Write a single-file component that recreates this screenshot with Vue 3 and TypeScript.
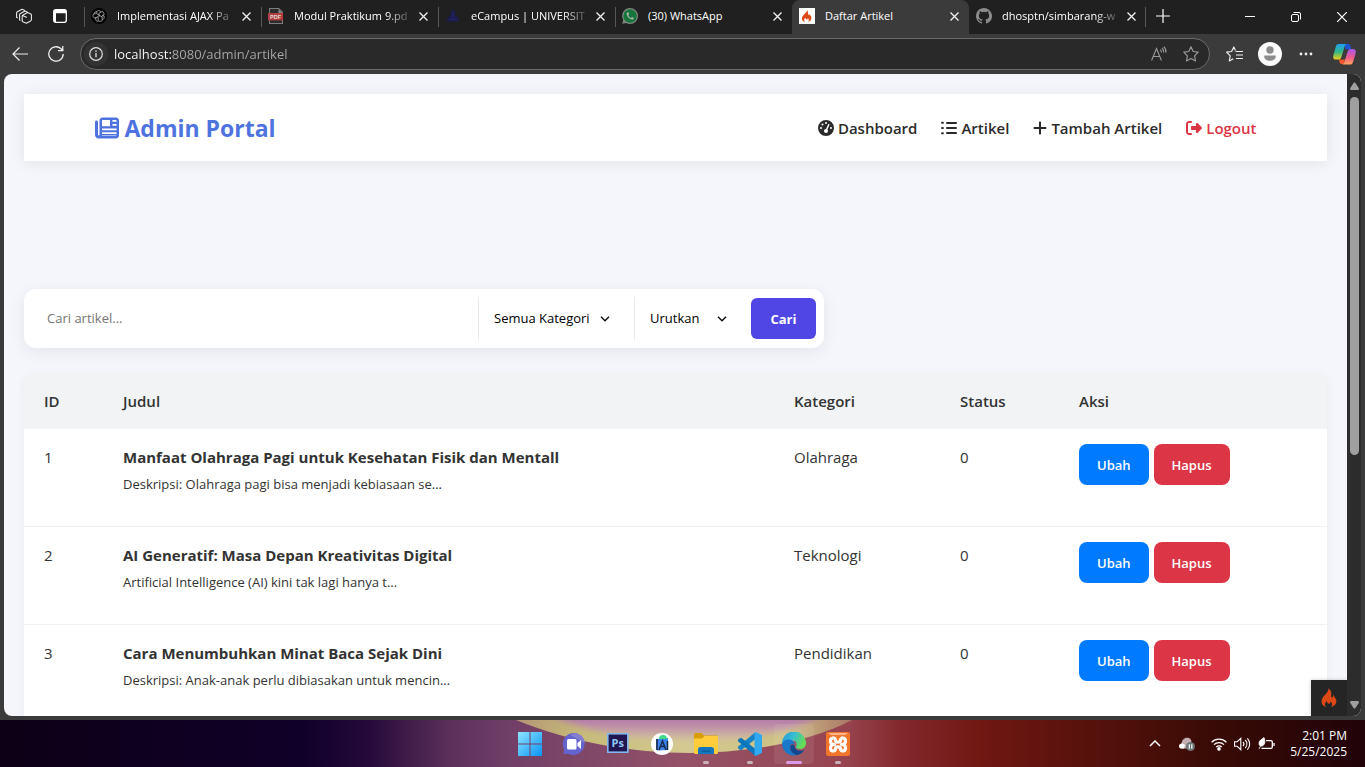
<script setup lang="ts">
import { ref } from 'vue'

interface Tab { id: string; title: string; active?: boolean; faded?: boolean }
interface Article { id: number; title: string; excerpt: string; category: string; status: number }

const tabs: Tab[] = [
  { id: 'gpt', title: 'Implementasi AJAX Pa', faded: true },
  { id: 'pdf', title: 'Modul Praktikum 9.pd', faded: true },
  { id: 'campus', title: 'eCampus | UNIVERSIT', faded: true },
  { id: 'wa', title: '(30) WhatsApp' },
  { id: 'ci', title: 'Daftar Artikel', active: true },
  { id: 'gh', title: 'dhosptn/simbarang-w', faded: true },
]

const articles: Article[] = [
  { id: 1, title: 'Manfaat Olahraga Pagi untuk Kesehatan Fisik dan Mentall', excerpt: 'Deskripsi: Olahraga pagi bisa menjadi kebiasaan se...', category: 'Olahraga', status: 0 },
  { id: 2, title: 'AI Generatif: Masa Depan Kreativitas Digital', excerpt: 'Artificial Intelligence (AI) kini tak lagi hanya t...', category: 'Teknologi', status: 0 },
  { id: 3, title: 'Cara Menumbuhkan Minat Baca Sejak Dini', excerpt: 'Deskripsi: Anak-anak perlu dibiasakan untuk mencin...', category: 'Pendidikan', status: 0 },
]

const url = ref('localhost:8080/admin/artikel')
const query = ref('')
const category = ref('')
const sort = ref('')
</script>

<template>
  <div class="desktop">
    <div class="browser">
      <header class="tabstrip">
        <button class="strip-btn" aria-label="Workspaces">
          <svg width="16" height="16" viewBox="0 0 16 16" fill="none" stroke="#e8e8e8" stroke-width="1.1" stroke-linejoin="round" stroke-linecap="round"><path d="M6.200 8.200c0-.6.300-1 .8-1.300l4.600-2.300 3.200 1.400c.4.200.6.500.6 1v4.600c0 .5-.3 1-.8 1.300l-4.200 2.300-3.600-1.400c-.4-.2-.6-.5-.6-1zM6.500 7.600l4 1.600M4 12.200l-.4-.2V6.800c0-.6.3-1 .8-1.300L9 3l2.200 1M1.400 9.800l-.8-.4V5c0-.6.3-1 .8-1.300L6 1.200 8.400 2.200" /></svg>
        </button>
        <button class="strip-btn actions-btn" aria-label="Tab actions">
          <svg width="14" height="14" viewBox="0 0 14 14"><rect x=".7" y=".7" width="12.6" height="12.6" rx="2" fill="none" stroke="#fff" stroke-width="1.300" /><path d="M1 1h12v3.200H1z M1 4h2v9H1z" fill="#fff" /></svg>
        </button>
        <div class="tabs" role="tablist">
          <div v-for="t in tabs" :key="t.id" class="tab" :class="{ active: t.active, faded: t.faded }" role="tab" :aria-selected="!!t.active">
            <svg v-if="t.id === 'gpt'" class="fav" viewBox="0 0 16 16"><circle cx="8" cy="8" r="8" fill="#000" /><g fill="none" stroke="#a8a8a8" stroke-width=".9"><path d="M8 8.900V5.200l3-1.700c1.600.5 2.400 2 1.900 3.600L9.800 8.900M8 7.100l3.200 1.800v3.500c-1.200 1.200-2.900 1.200-4 0l-.1-3.600M7.200 8.400L4 10.200c-1.700-.5-2.500-2-2-3.600l3.100-1.700M8.800 7.600L5.700 5.800V3.500c1.200-1.300 3-1.200 4 0v.5M11.200 7l1.900 1.200c.5 1.700-.4 3.200-1.900 3.600M4.800 9v3c.5 1.200 1.500 1.500 2.700 1.200M3 6.200l.4-1.500c.8-.9 1.600-1.100 2.400-1" /></g></svg>
            <svg v-else-if="t.id === 'pdf'" class="fav" viewBox="0 0 16 16"><path d="M1 0h10l4 4v12H1z" fill="#7d7d7d" /><path d="M2 1h8.600L14 4.400V15H2z" fill="#2c2c2c" /><path d="M10.500 1v4H14z" fill="#8a8a8a" /><rect x="0" y="5" width="15" height="7.400" fill="#b33c3c" /><text x="7.500" y="10.800" text-anchor="middle" font-family="Liberation Sans, sans-serif" font-size="5.500" font-weight="700" fill="#ddd">PDF</text></svg>
            <svg v-else-if="t.id === 'campus'" class="fav" viewBox="0 0 16 16"><path d="M8 1l2.400 3-.6 3 3.200 2 1.600 4.600H1.400L3 9l3.200-2-.6-3z" fill="#1b1c4c" /><path d="M4 12.600c2-2 6-2 8 0M8 4v5" stroke="#292a72" fill="none" /></svg>
            <svg v-else-if="t.id === 'wa'" class="fav" viewBox="0 0 16 16"><path d="M8 0a8 8 0 0 1 0 16 8 8 0 0 1-3.800-1L.2 15.800l1-3.800A8 8 0 0 1 8 0z" fill="#7d877f" /><circle cx="8.100" cy="8" r="6.700" fill="#17753a" /><path d="M5.600 4.200c-.8.5-1.200 1.500-.8 2.600.8 2.400 2.500 4 4.900 4.700 1 .3 2-.3 2.200-1.500l-1.800-1-.9 1C7.800 9.500 6.800 8.500 6.300 7.200l.8-.9-.7-2z" fill="#a9b5ab" /></svg>
            <svg v-else-if="t.id === 'ci'" class="fav" viewBox="0 0 16 16"><path d="M0 0h16v16H0z" fill="#fff" /><path d="M8 2c.5 2-3 4-4.500 6.500C2 11 3.500 13.300 6 14c-1.500-1.500-.8-3.200.5-4.200 0 1.200.6 1.700 1.300 1.700s1.100-.6.9-1.500c1.500 1 1.600 2.800.3 4 2.500-.6 3.800-2.500 3.300-4.700-.3-1.500-1.500-2-1.600-3.300-.5.3-.6.8-.5 1.500C8.500 6.500 9.500 3.500 8 2z" fill="#dd4814" /></svg>
            <svg v-else class="fav" viewBox="0 0 16 16"><path d="M8 0C3.580 0 0 3.580 0 8c0 3.540 2.290 6.530 5.470 7.590.4.070.55-.17.55-.38v-1.490c-2.010.37-2.530-.49-2.690-.94-.09-.23-.48-.94-.82-1.130-.28-.15-.68-.52-.01-.53.63-.01 1.080.58 1.230.82.72 1.210 1.870.87 2.330.66.07-.52.28-.87.51-1.070-1.780-.2-3.640-.89-3.640-3.950 0-.87.31-1.590.82-2.150-.08-.2-.36-1.020.08-2.120 0 0 .67-.21 2.200.82a7.600 7.600 0 0 1 4 0c1.530-1.040 2.200-.82 2.200-.82.44 1.100.16 1.920.08 2.120.51.56.82 1.270.82 2.150 0 3.070-1.870 3.750-3.650 3.950.29.25.54.73.54 1.480v2.200c0 .21.15.46.55.38A8 8 0 0 0 8 0z" fill="#8b8b8b" /></svg>
            <span class="tab-title">{{ t.title }}</span>
            <button class="tab-close" :aria-label="'Close ' + t.title">
              <svg width="9" height="9" viewBox="0 0 9 9"><path d="M.5.5l8 8M8.500.5l-8 8" stroke="#f2f2f2" stroke-width="1.300" /></svg>
            </button>
          </div>
        </div>
        <button class="new-tab" aria-label="New tab">
          <svg width="14" height="14" viewBox="0 0 14 14"><path d="M7 0v14M0 7h14" stroke="#fff" stroke-width="1.200" /></svg>
        </button>
        <div class="win-controls">
          <button aria-label="Minimize"><svg width="10" height="10" viewBox="0 0 10 10"><path d="M0 4.500h10" stroke="#fff" /></svg></button>
          <button aria-label="Restore"><svg width="10" height="10" viewBox="0 0 10 10" fill="none" stroke="#fff"><rect x=".5" y="2.500" width="7" height="7" rx="1.500" /><path d="M2.500.5H8A1.500 1.500 0 0 1 9.500 2v5.500" /></svg></button>
          <button aria-label="Close window"><svg width="10" height="10" viewBox="0 0 10 10"><path d="M0 0l10 10M10 0L0 10" stroke="#fff" stroke-width="1.200" /></svg></button>
        </div>
      </header>

      <div class="toolbar">
        <button class="tool" aria-label="Back"><svg width="16" height="14" viewBox="0 0 16 14" fill="none" stroke="#eee" stroke-width="1.200"><path d="M16 7H1M7.500.5L1 7l6.500 6.500" /></svg></button>
        <button class="tool" aria-label="Refresh"><svg width="16" height="16" viewBox="0 0 16 16" fill="none" stroke="#eee" stroke-width="1.300"><path d="M15.200 8A7.200 7.200 0 1 1 13 2.800L14.500 4.500M14.800 0v4.700H10" /></svg></button>
        <div class="address">
          <span class="info"><svg width="14" height="14" viewBox="0 0 14 14"><circle cx="7" cy="7" r="6.300" fill="none" stroke="#ddd" stroke-width="1.200" /><path d="M7 6v4.200M7 3.600v1.300" stroke="#ddd" stroke-width="1.300" /></svg></span>
          <input v-model="url" class="url" type="text" aria-label="Address" />
          <button aria-label="Read aloud"><svg width="16" height="16" viewBox="0 0 16 16" fill="none" stroke="#999" stroke-width="1.100"><path d="M.6 14.500L5.500 2.500l4.900 12M2.300 10.500h6.400M9.200 3.600c.9.800 1.300 1.700 1.200 2.900M11 2c1.300 1.200 1.800 2.700 1.600 4.500M12.700.6c1.800 1.600 2.500 3.600 2.200 6" /></svg></button>
          <button aria-label="Add to favorites"><svg width="16" height="16" viewBox="0 0 16 16" fill="none" stroke="#999" stroke-width="1.200" stroke-linejoin="round"><path d="M8 .8l2.200 4.700 5 .7-3.600 3.600.9 5.200L8 12.500 3.500 15l.9-5.200L.8 6.200l5-.7z" /></svg></button>
        </div>
        <button class="tool" aria-label="Favorites"><svg width="17" height="16" viewBox="0 0 17 16" fill="none" stroke="#eee" stroke-width="1.200" stroke-linejoin="round"><path d="M9.500 4.500L7.800 1 5.600 5.500l-5 .7 3.600 3.600L3.300 15l4-2.200M9.500 5.500H17M10 9h7M10 12.500h7" /></svg></button>
        <button class="tool profile" aria-label="Profile"><svg width="24" height="24" viewBox="0 0 24 24"><circle cx="12" cy="12" r="12" fill="#fbfbfb" /><circle cx="12" cy="8" r="3.700" fill="#8c8c8c" /><path d="M6.300 13.500h11.400c.5 3.300-2 5.300-5.700 5.300s-6.200-2-5.700-5.300z" fill="#8c8c8c" /></svg></button>
        <button class="tool" aria-label="Settings and more"><svg width="14" height="4" viewBox="0 0 14 4" fill="#eee"><circle cx="2" cy="2" r="1.400" /><circle cx="7" cy="2" r="1.400" /><circle cx="12" cy="2" r="1.400" /></svg></button>
        <button class="tool copilot" aria-label="Copilot">
          <svg width="23" height="21" viewBox="0 0 23 21">
            <defs>
              <linearGradient id="cpA" x1="0" y1="0" x2="0" y2="1"><stop offset="0" stop-color="#1fa0f2" /><stop offset=".5" stop-color="#2fb889" /><stop offset="1" stop-color="#f3cf16" /></linearGradient>
              <linearGradient id="cpB" x1="0" y1="0" x2="0" y2="1"><stop offset="0" stop-color="#a657ee" /><stop offset=".55" stop-color="#ef5a8d" /><stop offset="1" stop-color="#ffa45a" /></linearGradient>
            </defs>
            <path d="M12 0h3c2 0 2.600 1.500 3.200 5.200h-5.700z" fill="#1b54d8" />
            <path d="M6 15.500h6L10.500 20H8.600C6.600 20 6.400 18.300 6 15.500z" fill="#f0582b" />
            <path d="M5.800 0h7.700c-1.600.9-2 2.800-2.700 5.200L8.400 13c-.7 2-1.500 2.600-3.400 2.600H2.700C.4 15.600-.3 13.800.4 11.200L2.700 3C3.400.8 4.200 0 5.800 0z" fill="url(#cpA)" />
            <path d="M17 20.500H9.500c1.500-.9 2-2.800 2.700-5.200l2.400-7.600c.7-2 1.500-2.700 3.400-2.700h2.200c2.300 0 3 1.900 2.400 4.400l-2.400 8c-.7 2.200-1.600 3.100-3.200 3.100z" fill="url(#cpB)" />
          </svg>
        </button>
      </div>

      <div class="viewport">
        <div class="page">
          <nav class="navbar">
            <div class="container">
              <a class="brand" href="#">
                <svg width="24" height="24" viewBox="0 0 512 512" fill="currentColor" fill-rule="evenodd"><path d="M96 96c0-35.300 28.700-64 64-64h288c35.300 0 64 28.700 64 64v320c0 35.300-28.700 64-64 64H80c-44.200 0-80-35.800-80-80V128c0-17.700 14.300-32 32-32s32 14.300 32 32v272c0 8.800 7.200 16 16 16s16-7.200 16-16zM165 86q-15 0-15 15v105q0 15 15 15h155V86zM372 86v38h88v-23q0-15-15-15zM372 172v38h88v-38zM150 266v38h310v-38zM150 348v38h310v-38zM148 426h300q12 0 12-8H150z" /></svg>
                <span>Admin Portal</span>
              </a>
              <div class="links">
                <a href="#"><svg width="16" height="16" viewBox="0 0 512 512"><path fill="currentColor" d="M0 256a256 256 0 1 1 512 0A256 256 0 1 1 0 256zM288 96a32 32 0 1 0-64 0 32 32 0 1 0 64 0zM256 416c35.300 0 64-28.700 64-64 0-17.400-6.900-33.100-18.100-44.600L366 161.700c5.300-12.100-.2-26.300-12.300-31.600s-26.300.2-31.600 12.300L257.900 288H256c-35.300 0-64 28.700-64 64s28.700 64 64 64zM176 144a32 32 0 1 0-64 0 32 32 0 1 0 64 0zM96 288a32 32 0 1 0 0-64 32 32 0 1 0 0 64zm352-32a32 32 0 1 0-64 0 32 32 0 1 0 64 0z" /></svg>Dashboard</a>
                <a href="#"><svg width="16" height="16" viewBox="0 0 512 512"><path fill="currentColor" d="M24 56h48a16 16 0 0 1 16 16v32a16 16 0 0 1-16 16H24a16 16 0 0 1-16-16V72a16 16 0 0 1 16-16zM24 224h48a16 16 0 0 1 16 16v32a16 16 0 0 1-16 16H24a16 16 0 0 1-16-16v-32a16 16 0 0 1 16-16zM24 392h48a16 16 0 0 1 16 16v32a16 16 0 0 1-16 16H24a16 16 0 0 1-16-16v-32a16 16 0 0 1 16-16zM192 64h288a32 32 0 0 1 0 64H192a32 32 0 0 1 0-64zM192 224h288a32 32 0 0 1 0 64H192a32 32 0 0 1 0-64zM192 384h288a32 32 0 0 1 0 64H192a32 32 0 0 1 0-64z" /></svg>Artikel</a>
                <a href="#"><svg width="14" height="16" viewBox="0 0 448 512"><path fill="currentColor" d="M256 80c0-17.700-14.300-32-32-32s-32 14.300-32 32v144H48c-17.700 0-32 14.300-32 32s14.300 32 32 32h144v144c0 17.700 14.300 32 32 32s32-14.300 32-32V288h144c17.700 0 32-14.300 32-32s-14.300-32-32-32H256V80z" /></svg>Tambah Artikel</a>
                <a href="#" class="logout"><svg width="16" height="16" viewBox="0 0 512 512"><path fill="currentColor" d="M377.900 105.900L500.700 228.700c7.200 7.200 11.300 17.100 11.300 27.300s-4.100 20.100-11.300 27.300L377.900 406.100c-6.400 6.400-15 9.900-24 9.900-18.700 0-33.900-15.200-33.900-33.900V320H192c-17.700 0-32-14.300-32-32v-64c0-17.700 14.300-32 32-32h128v-62.100c0-18.700 15.200-33.900 33.900-33.900 9 0 17.600 3.600 24 9.900zM160 96H96c-17.700 0-32 14.300-32 32v256c0 17.700 14.300 32 32 32h64c17.700 0 32 14.300 32 32s-14.300 32-32 32H96c-53 0-96-43-96-96V128C0 75 43 32 96 32h64c17.700 0 32 14.300 32 32s-14.300 32-32 32z" /></svg>Logout</a>
              </div>
            </div>
          </nav>

          <form class="search" @submit.prevent>
            <input v-model="query" class="search-input" type="text" placeholder="Cari artikel..." aria-label="Cari artikel" />
            <div class="select cat">
              <select v-model="category" aria-label="Kategori">
                <option value="">Semua Kategori</option>
                <option>Olahraga</option>
                <option>Teknologi</option>
                <option>Pendidikan</option>
              </select>
              <svg width="10" height="6" viewBox="0 0 10 6"><path d="M1 .8l4 4 4-4" fill="none" stroke="#111" stroke-width="1.500" /></svg>
            </div>
            <div class="select sort">
              <select v-model="sort" aria-label="Urutkan">
                <option value="">Urutkan</option>
                <option value="id">ID</option>
                <option value="judul">Judul</option>
              </select>
              <svg width="10" height="6" viewBox="0 0 10 6"><path d="M1 .8l4 4 4-4" fill="none" stroke="#111" stroke-width="1.500" /></svg>
            </div>
            <button type="submit" class="submit">Cari</button>
          </form>

          <table class="articles">
            <colgroup><col class="c-id" /><col /><col class="c-cat" /><col class="c-status" /><col class="c-act" /></colgroup>
            <thead>
              <tr><th>ID</th><th>Judul</th><th>Kategori</th><th>Status</th><th>Aksi</th></tr>
            </thead>
            <tbody>
              <tr v-for="a in articles" :key="a.id">
                <td>{{ a.id }}</td>
                <td><b>{{ a.title }}</b><p>{{ a.excerpt }}</p></td>
                <td>{{ a.category }}</td>
                <td>{{ a.status }}</td>
                <td><div class="actions"><a href="#" class="btn edit">Ubah</a><a href="#" class="btn delete">Hapus</a></div></td>
              </tr>
            </tbody>
          </table>
        </div>

        <button class="debug" aria-label="Debug toolbar">
          <svg width="16" height="20" viewBox="0 0 18 22"><path d="M8 0c1.500 3.500-3.500 6.500-6 10.500C-1 15.500 1 20 6 21.500c-2.500-2.500-1.800-5.200.7-7 0 2 1 2.900 2.300 2.900s2-1.200 1.400-2.700c2.600 1.600 2.900 4.900.4 6.800 4.700-1 7.200-4.300 6.300-8.300-.6-2.700-2.700-3.400-2.900-5.700-.9.600-1.100 1.500-.8 2.700-1.500.5-2.300-.6-2-2.200C11.900 5 11.500 2 8 0z" fill="#dd4814" /></svg>
        </button>
        <div class="scrollbar" aria-hidden="true">
          <svg width="9" height="8" viewBox="0 0 9 8"><path d="M3.700.8Q4.500 0 5.300.8L9 6.500Q9 8 8 8H1Q0 8 0 6.500z" fill="#9f9f9f" /></svg>
          <div class="track"><div class="thumb"></div></div>
          <svg width="9" height="8" viewBox="0 0 9 8"><path d="M3.700 7.200Q4.500 8 5.300 7.200L9 1.500Q9 0 8 0H1Q0 0 0 1.500z" fill="#9f9f9f" /></svg>
        </div>
      </div>
    </div>

    <footer class="taskbar">
      <svg class="wallpaper" viewBox="0 0 1365 47" preserveAspectRatio="none" aria-hidden="true">
        <defs>
          <linearGradient id="bg" x1="0" x2="1" y1="0" y2="0">
            <stop offset="0" stop-color="#0c0016" /><stop offset=".22" stop-color="#0f0029" /><stop offset=".27" stop-color="#25093a" /><stop offset=".33" stop-color="#5c305a" /><stop offset=".37" stop-color="#6f3e67" /><stop offset=".5" stop-color="#945268" /><stop offset=".62" stop-color="#97444f" /><stop offset=".66" stop-color="#82282c" /><stop offset=".72" stop-color="#701712" /><stop offset=".82" stop-color="#50100a" /><stop offset=".9" stop-color="#360a05" /><stop offset="1" stop-color="#210309" />
          </linearGradient>
          <linearGradient id="rim" x1="0" x2="1" y1="0" y2="0"><stop offset="0" stop-color="#b49576" /><stop offset=".2" stop-color="#c6bb78" /><stop offset=".5" stop-color="#d4ca91" /><stop offset=".8" stop-color="#cdc083" /><stop offset="1" stop-color="#ab7668" /></linearGradient>
          <linearGradient id="core" x1="0" x2="0" y1="0" y2="1"><stop offset="0" stop-color="#ab6cab" /><stop offset=".5" stop-color="#c093a8" /><stop offset="1" stop-color="#d4c99a" /></linearGradient>
          <filter id="soft" x="-10%" y="-50%" width="120%" height="200%"><feGaussianBlur stdDeviation="3" /></filter>
        </defs>
        <path d="M0 0h1365v47H0z" fill="url(#bg)" />
        <path d="M516 0C570 22 632 33 690 33S810 22 852 0z" fill="url(#rim)" />
        <path d="M548-6C590 14 640 21 690 21S790 14 824-6z" fill="url(#core)" filter="url(#soft)" />
      </svg>
      <div class="apps">
        <button class="app" aria-label="Start">
          <svg width="24" height="24" viewBox="0 0 24 24"><defs><linearGradient id="win" x1="0" y1="0" x2="1" y2="1"><stop offset="0" stop-color="#8ee5ff" /><stop offset="1" stop-color="#0a93f4" /></linearGradient></defs><path d="M0 0h11.500v11.500H0zM12.500 0H24v11.500H12.500zM0 12.500h11.500V24H0zM12.500 12.500H24V24H12.500z" fill="url(#win)" /></svg>
        </button>
        <button class="app" aria-label="Chat">
          <svg width="24" height="24" viewBox="0 0 24 24"><path d="M12 1a11 11 0 1 1-5 21H1.500L2 17A11 11 0 0 1 12 1z" fill="#6463cf" /><path d="M12 1a11 11 0 0 1 11 10L8 3z" fill="#8480cf" /><rect x="5" y="7" width="9.500" height="10.500" rx="1.500" fill="#fff" /><path d="M15.500 11l3.500-3v9l-3.500-3z" fill="#fff" /></svg>
        </button>
        <button class="app" aria-label="Photoshop">
          <svg width="24" height="24" viewBox="0 0 24 24"><rect x="1.800" y="1.800" width="20" height="18.400" fill="#211650" stroke="#80b7ef" stroke-width="1.600" /><text x="11.700" y="15" text-anchor="middle" font-family="Open Sans, sans-serif" font-size="11" font-weight="700" fill="#8fc8fa">Ps</text></svg>
        </button>
        <button class="app" aria-label="Android Studio">
          <svg width="24" height="24" viewBox="0 0 24 24"><circle cx="12" cy="12" r="11" fill="#fff" /><path d="M6 7l12-1v12l-11 .5z" fill="#3b83ee" /><path d="M9 7a4 4 0 0 1 8 0z" fill="#3ddc84" /><path d="M6 7h2v11H6z" fill="#223d66" /><path d="M9 18l3.500-9L16 18M10.500 14.500h4M17.500 9v9" fill="none" stroke="#172a46" stroke-width="1.500" /></svg>
        </button>
        <button class="app run" aria-label="File Explorer">
          <svg width="24" height="24" viewBox="0 0 24 24"><path d="M0 2.500C0 1.500.6 1 1.500 1h6.200L10 3.500h12.500c.9 0 1.500.6 1.500 1.500v8H0z" fill="#d99c0b" /><path d="M0 6.500h8L10.500 4H24v16.500c0 .9-.6 1.500-1.500 1.500h-21C.6 22 0 21.400 0 20.500z" fill="#ffcd3c" /><path d="M4 22v-4.500C4 16 5 15 6.500 15h11c1.500 0 2.500 1 2.500 2.500V22z" fill="#1277bd" /><path d="M7.500 18.500h9V20h-9z" fill="#0c5c9c" /></svg>
        </button>
        <button class="app run" aria-label="Visual Studio Code">
          <svg width="24" height="24" viewBox="0 0 24 24"><path d="M17.500 0v7L3.500 18 2.200 18 0 16.300v-1.500z" fill="#1683c9" /><path d="M17.500 24v-7L3.500 6H2.200L0 7.700v1.500z" fill="#0d76bd" /><path d="M17.500 0L24 3v18l-6.500 3c-.6-.2-1-.7-1-1.300V1.300c0-.6.400-1.100 1-1.300z" fill="#30a9ef" /></svg>
        </button>
        <button class="app run current" aria-label="Edge">
          <svg width="24" height="24" viewBox="0 0 24 24"><defs><linearGradient id="edg" x1="0" y1="0" x2="1" y2=".4"><stop offset="0" stop-color="#2196d8" /><stop offset=".5" stop-color="#36bdd3" /><stop offset="1" stop-color="#64dd55" /></linearGradient></defs><path d="M0 12A12 12 0 0 1 24 11c0 4-3 6-6 6s-4.500-1-4-2.500c1.500-2 .5-6-3.500-6.500C5 7.500 1 9 0 12z" fill="url(#edg)" /><path d="M0 12c.5-3 4-5 8-4.500 3.500.5 5 3 4.500 5-.5-1.500-5-1-4.500 3.500.4 4 4.500 7 8 6.800A12 12 0 0 1 0 12z" fill="#1a78cb" /><path d="M8.500 14c-1.500 4 2 8.500 7.500 9 3-1 5-3 6.300-5.300-4 2.300-8.800 1.300-9.800-3.700-.5-2-3-2-4 0z" fill="#10478f" /></svg>
        </button>
        <button class="app run" aria-label="XAMPP">
          <svg width="24" height="24" viewBox="0 0 24 24"><rect width="24" height="24" rx="2" fill="#f1762a" /><path d="M2 1h20l-3 2H5z" fill="#f9b68b" /><path d="M8.500 12.500C5 12.300 4.500 11 4.500 9c0-3.800 5-4 5-.8 0 2.600 5 2.600 5 0 0-3.200 5-3 5 .8 0 2-.5 3.300-4 3.500 3.500.2 4 1.500 4 3.500 0 3.800-5 4-5 .8 0-2.600-5-2.600-5 0 0 3.200-5 3-5-.8 0-2 .5-3.300 4-3.500z" fill="none" stroke="#fff" stroke-width="3.200" stroke-linejoin="round" /></svg>
        </button>
      </div>
      <div class="tray">
        <button aria-label="Hidden icons"><svg width="12" height="7" viewBox="0 0 12 7"><path d="M1 6l5-5 5 5" fill="none" stroke="#fff" stroke-width="1.500" /></svg></button>
        <button class="cloud" aria-label="OneDrive"><svg width="16" height="14" viewBox="0 0 16 14"><path d="M3 11.500C0 11.500-.5 7.500 2.500 7 2.500 2.500 6 0 9 .8c3 .7 3.500 3 3.500 4.500L8 11.500z" fill="#c3afb2" /><path d="M0 9c0-3 4-3.500 6-1l-1 3.500H2C.8 11.500 0 10.500 0 9z" fill="#fff" /><circle cx="11.500" cy="9.500" r="4.500" fill="#6b7376" /><path d="M10.300 7.300v4.400M12.800 7.300v4.400" stroke="#fff" stroke-width="1.200" /></svg></button>
        <button class="status" aria-label="Network, volume and battery">
          <svg width="16" height="14" viewBox="0 0 16 14" fill="none" stroke="#fff" stroke-width="1.200"><path d="M.6 5.200a10.500 10.500 0 0 1 14.800 0M3 7.700a7 7 0 0 1 10 0M5.300 10a3.800 3.800 0 0 1 5.400 0" /><circle cx="8" cy="11.900" r="1.200" fill="#fff" /></svg>
          <svg width="17" height="14" viewBox="0 0 17 14" fill="none" stroke="#fff" stroke-width="1.100"><path d="M.6 4.700h2.600L6.800 1.300v11.400L3.200 9.300H.6zM9 4.800c1.100 1.200 1.100 3.200 0 4.400M11.200 3c2.200 2.300 2.200 5.700 0 8M13.400 1.300c3 3.300 3 8.100 0 11.400" /></svg>
          <svg width="17" height="14" viewBox="0 0 17 14" fill="none" stroke="#fff" stroke-width="1.300"><path d="M8 3.600h5c.8 0 1.300.5 1.300 1.300v5.200c0 .8-.5 1.300-1.300 1.300H3.500M16 6v3" /><path d="M1 6.500C1 3 4 2.500 6 .5c1.500 4 1 7.500-2 8.500-1.800.5-3-.8-3-2.500zM1 12l3-6" fill="#fff" stroke-width=".8" /></svg>
        </button>
        <div class="clock"><span>2:01 PM</span><span>5/25/2025</span></div>
      </div>
    </footer>
  </div>
</template>

<style>
html, body { margin: 0; }
</style>

<style scoped>
.desktop, .desktop * { box-sizing: border-box; }
.desktop {
  height: 100vh;
  display: flex;
  flex-direction: column;
  overflow: hidden;
  font-family: "Segoe UI", "Open Sans", "Noto Sans", sans-serif;
}
button, input, select { font-family: inherit; }
button { border: 0; background: none; padding: 0; display: flex; align-items: center; justify-content: center; }
svg { display: block; flex: none; }
a { text-decoration: none; }

.browser { flex: 1; min-height: 0; display: flex; flex-direction: column; background: #3b3b3b; }
.tabstrip { height: 34px; display: flex; background: #202020; color: #fff; }
.strip-btn { width: 48px; padding-bottom: 2px; }
.actions-btn { width: 36px; padding-right: 12px; }
.tabs { display: flex; min-width: 0; }
.tab { width: 177px; height: 34px; display: flex; align-items: center; padding: 0 6px 2px 7px; position: relative; }
.tab::before { content: ""; position: absolute; left: 0; top: 7px; width: 1px; height: 20px; background: #575757; }
.tab:last-child::after { content: ""; position: absolute; right: 0; top: 7px; width: 1px; height: 20px; background: #575757; }
.tab.active { background: #3b3b3b; border-radius: 8px 8px 0 0; }
.tab.active::before, .tab.active + .tab::before { display: none; }
.fav { width: 16px; height: 16px; }
.tab-title { flex: 1; min-width: 0; margin-left: 10px; white-space: nowrap; font-size: 11px; line-height: 16px; }
.faded .tab-title { mask-image: linear-gradient(to right, #000 92px, transparent 120px); }
.tab-close { width: 18px; height: 18px; }
.new-tab { width: 34px; padding-bottom: 3px; }
.win-controls { margin-left: auto; display: flex; }
.win-controls button { width: 46px; }

.toolbar { height: 40px; display: flex; align-items: center; padding-left: 2px; }
.tool { width: 36px; height: 32px; }
.copilot { width: 41px; }
.address {
  flex: 1; height: 32px; margin: 0 6px; padding: 0 2px 0 3px; display: flex; align-items: center;
  border: 1px solid #6b6b6b; border-radius: 16px; background: #292929;
}
.info { width: 24px; height: 24px; display: grid; place-items: center; border-radius: 12px; background: #333; }
.url {
  flex: 1; min-width: 0; margin-left: 6px; border: 0; padding: 0; font-size: 13px; line-height: 20px; outline: 0; color: transparent;
  background: linear-gradient(to right, #fff 58px, #a9a9a9 58px); background-clip: text;
}
.address button { width: 32px; height: 28px; }

.viewport {
  flex: 1; min-height: 0; margin: 0 4px 4px; display: flex; overflow: hidden; position: relative;
  border-radius: 8px; background: #f5f6fb;
}
.page { flex: 1; min-width: 0; padding: 20px 20px 0; color: #333; font-size: 15px; line-height: 26px; }
.navbar { background: #fff; box-shadow: 0 2px 15px rgba(0, 0, 0, .08); }
.container { max-width: 1202px; height: 67px; margin: 0 auto; padding: 0 20px; display: flex; align-items: center; justify-content: space-between; }
.brand { display: flex; align-items: center; gap: 6px; color: #4e73df; font-size: 23px; font-weight: 700; }
.links { display: flex; gap: 24px; }
.links a { display: flex; align-items: center; gap: 4px; color: #2b2b2b; font-weight: 600; }
.links .logout { color: #dc3545; }

.search {
  max-width: 800px; height: 59px; margin: 128px 0 24px; padding: 8px; display: flex; align-items: center; gap: 8px;
  background: #fff; border-radius: 12px; box-shadow: 0 4px 16px rgba(0, 0, 0, .07);
}
.search input, .search select { height: 43px; border: 0; background: transparent; color: #000; font-size: 13px; outline: 0; }
.search-input { flex: 1; min-width: 0; padding: 0 15px 2px; }
.search-input::placeholder { color: #757575; }
.select { position: relative; border-left: 1px solid #eaeaea; }
.select select { width: 100%; padding: 0 15px 2px; appearance: none; }
.select svg { position: absolute; right: 16px; top: 19px; pointer-events: none; }
.cat { width: 148px; }
.sort { width: 109px; }
.submit { width: 65px; height: 41px; border-radius: 6px; background: #4f46e5; color: #fff; font-size: 13px; font-weight: 700; }

.articles { width: 100%; table-layout: fixed; border-spacing: 0; background: #fff; border-radius: 12px 12px 0 0; box-shadow: 0 2px 10px rgba(0, 0, 0, .05); }
.c-id { width: 79px; }
.c-cat { width: 166px; }
.c-status { width: 119px; }
.c-act { width: 268px; }
th { padding: 16px 20px 15px; text-align: left; font-weight: 600; background: #f1f3f5; }
th:first-child { border-top-left-radius: 12px; }
th:last-child { border-top-right-radius: 12px; }
td { padding: 15px 20px; vertical-align: top; border-bottom: 1px solid #f0f1f3; }
td b { display: block; }
td p { margin: 1px 0 14px; font-size: 13px; }
.actions { display: flex; gap: 5px; }
.btn { height: 41px; padding: 0 18px; display: flex; align-items: center; border-radius: 8px; color: #fff; font-size: 13px; font-weight: 600; }
.edit { background: #007bff; }
.delete { background: #dc3545; }

.debug { position: absolute; right: 14px; bottom: 0; width: 36px; height: 36px; background: #252525; box-shadow: 0 0 4px rgba(0, 0, 0, .2); }
.scrollbar { width: 14px; padding: 8px 0 7px; display: flex; flex-direction: column; align-items: center; background: #2c2c2c; z-index: 1; }
.track { flex: 1; width: 9px; margin: 7px 0; }
.thumb { height: 60%; border-radius: 5px; background: #9f9f9f; }

.taskbar { height: 47px; display: flex; position: relative; color: #fff; }
.wallpaper { position: absolute; inset: 0; width: 100%; height: 100%; }
.apps { position: relative; margin: 0 auto; padding-left: 2px; display: flex; gap: 4px; align-items: center; }
.app { width: 40px; height: 40px; position: relative; border-radius: 4px; }
.run::after { content: ""; position: absolute; left: 17px; bottom: 0; width: 6px; height: 3px; border-radius: 2px; background: #c9b3bb; }
.current { background: rgba(255, 255, 255, .08); }
.current::after { left: 12px; width: 16px; background: #d99ae6; }
.tray { position: absolute; right: 18px; top: 0; height: 47px; display: flex; align-items: center; }
.cloud { margin: 0 16px 0 18px; }
.status { gap: 7px; }
.clock { width: 72px; display: flex; flex-direction: column; align-items: flex-end; font-size: 12px; line-height: 16px; }
</style>
